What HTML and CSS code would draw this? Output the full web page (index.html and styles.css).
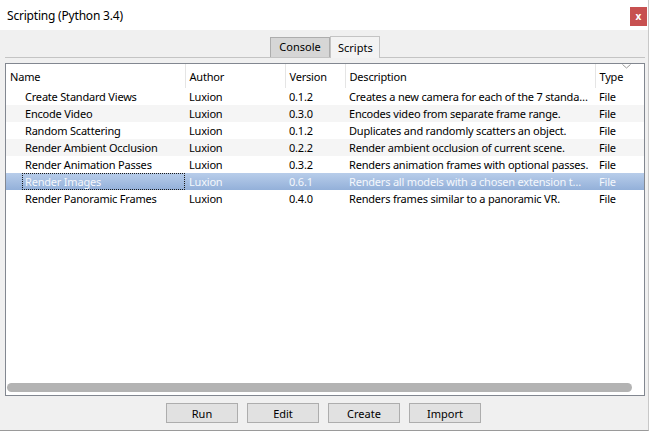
FILE: index.html
```html
<!DOCTYPE html>
<html lang="en">
<head>
    <meta charset="UTF-8">
    <title>Scripting (Python 3.4)</title>
    <link rel="stylesheet" href="styles.css">
</head>
<body>
    <div class="window">
        <div class="titlebar">
            <span class="title">Scripting (Python 3.4)</span>
            <button class="close-btn">x</button>
        </div>

        <div class="content">
            <div class="tabs">
                <div class="tab">Console</div>
                <div class="tab active">Scripts</div>
            </div>

            <div class="list-frame">
                <table class="script-table">
                    <colgroup>
                        <col style="width: 179px">
                        <col style="width: 100px">
                        <col style="width: 60px">
                        <col style="width: 250px">
                        <col>
                    </colgroup>
                    <thead>
                        <tr>
                            <th class="col-name">Name</th>
                            <th>Author</th>
                            <th>Version</th>
                            <th>Description</th>
                            <th class="col-type">Type
                                <svg class="sort-arrow" width="9" height="5" viewBox="0 0 9 5">
                                    <polyline points="0.5,0.5 4.5,4 8.5,0.5" fill="none" stroke="#9a9a9a" stroke-width="1"/>
                                </svg>
                            </th>
                        </tr>
                    </thead>
                    <tbody>
                        <tr>
                            <td class="name"><span>Create Standard Views</span></td>
                            <td>Luxion</td>
                            <td>0.1.2</td>
                            <td>Creates a new camera for each of the 7 standa…</td>
                            <td>File</td>
                        </tr>
                        <tr class="alt">
                            <td class="name"><span>Encode Video</span></td>
                            <td>Luxion</td>
                            <td>0.3.0</td>
                            <td>Encodes video from separate frame range.</td>
                            <td>File</td>
                        </tr>
                        <tr>
                            <td class="name"><span>Random Scattering</span></td>
                            <td>Luxion</td>
                            <td>0.1.2</td>
                            <td>Duplicates and randomly scatters an object.</td>
                            <td>File</td>
                        </tr>
                        <tr class="alt">
                            <td class="name"><span>Render Ambient Occlusion</span></td>
                            <td>Luxion</td>
                            <td>0.2.2</td>
                            <td>Render ambient occlusion of current scene.</td>
                            <td>File</td>
                        </tr>
                        <tr>
                            <td class="name"><span>Render Animation Passes</span></td>
                            <td>Luxion</td>
                            <td>0.3.2</td>
                            <td>Renders animation frames with optional passes.</td>
                            <td>File</td>
                        </tr>
                        <tr class="selected">
                            <td class="name"><span class="focus">Render Images</span></td>
                            <td>Luxion</td>
                            <td>0.6.1</td>
                            <td>Renders all models with a chosen extension t…</td>
                            <td>File</td>
                        </tr>
                        <tr>
                            <td class="name"><span>Render Panoramic Frames</span></td>
                            <td>Luxion</td>
                            <td>0.4.0</td>
                            <td>Renders frames similar to a panoramic VR.</td>
                            <td>File</td>
                        </tr>
                    </tbody>
                </table>
                <div class="list-space"></div>
                <div class="hscroll">
                    <div class="hscroll-thumb"></div>
                </div>
            </div>

            <div class="buttons">
                <button class="btn">Run</button>
                <button class="btn">Edit</button>
                <button class="btn">Create</button>
                <button class="btn">Import</button>
            </div>
        </div>
    </div>
</body>
</html>
```

FILE: styles.css
```css
html, body {
    margin: 0;
    padding: 0;
}
body {
    width: 651px;
    height: 431px;
    overflow: hidden;
    background: #ffffff;
    font-family: "Noto Sans", "Open Sans", sans-serif;
    font-size: 11px;
    color: #000;
}
.window {
    width: 648px;
    height: 430px;
    display: flex;
    flex-direction: column;
    border-right: 1px solid #c8c8c8;
    border-bottom: 1px solid #9a9a9a;
}
.titlebar {
    height: 30px;
    background: #ffffff;
    display: flex;
    align-items: center;
    justify-content: space-between;
    padding-left: 7px;
    padding-right: 1px;
}
.title {
    font-size: 12px;
    letter-spacing: -0.2px;
    color: #000;
}
.close-btn {
    width: 17px;
    height: 19px;
    margin-top: 3px;
    border: none;
    padding: 0;
    background: #c75050;
    color: #fff;
    font-family: "Noto Sans", sans-serif;
    font-size: 10px;
    font-weight: bold;
    line-height: 17px;
}
.content {
    flex: 1;
    background: #f0f0f0;
    display: flex;
    flex-direction: column;
    padding: 5px 3px 0 5px;
}
.tabs {
    height: 22px;
    display: flex;
    align-items: flex-end;
    padding-left: 265px;
    border-bottom: 1px solid #c4c4c4;
}
.tab {
    height: 19px;
    line-height: 18px;
    padding: 0 7px;
    width: 44px;
    text-align: center;
    background: #d6d6d6;
    border: 1px solid #adadad;
    border-bottom: none;
    box-sizing: content-box;
    font-size: 11px;
}
.tab.active {
    height: 21px;
    line-height: 22px;
    width: 34px;
    background: #f3f3f3;
    border-color: #c4c4c4;
    margin-bottom: -1px;
}
.list-frame {
    margin-top: 5px;
    height: 331px;
    background: #fff;
    border: 1px solid #828790;
    display: flex;
    flex-direction: column;
}
.script-table {
    width: 638px;
    table-layout: fixed;
    border-collapse: collapse;
    letter-spacing: -0.2px;
}
.script-table th {
    height: 24px;
    padding: 0 0 0 4px;
    text-align: left;
    font-weight: normal;
    border-left: 1px solid #e5e5e5;
    white-space: nowrap;
    overflow: hidden;
}
.script-table th.col-name {
    border-left: none;
}
.script-table th.col-type {
    position: relative;
    overflow: visible;
}
.sort-arrow {
    position: absolute;
    left: 26px;
    top: 0;
}
.script-table td {
    height: 17px;
    padding: 0 0 0 4px;
    white-space: nowrap;
    overflow: hidden;
}
.script-table td.name {
    padding-left: 16px;
}
.script-table td.name span {
    display: block;
    padding-left: 2px;
    height: 15px;
    line-height: 15px;
    border: 1px solid transparent;
}
.script-table td.name span.focus {
    border: 1px dotted #1a1a1a;
}
.script-table tr.alt td {
    background: #f5f5f5;
}
.script-table tr.selected td {
    background: linear-gradient(#b8cdea, #93b0d9);
    color: #f4f7fc;
}
.list-space {
    flex: 1;
}
.hscroll {
    height: 9px;
    padding: 0 12px 3px 1px;
}
.hscroll-thumb {
    height: 9px;
    background: #b3b3b3;
    border-radius: 5px;
}
.buttons {
    display: flex;
    justify-content: center;
    gap: 9px;
    padding-top: 7px;
    padding-right: 3px;
}
.btn {
    width: 72px;
    height: 20px;
    background: #e1e1e1;
    border: 1px solid #adadad;
    font-family: "Noto Sans", "Open Sans", sans-serif;
    font-size: 11px;
    color: #000;
    padding: 0;
}
```
